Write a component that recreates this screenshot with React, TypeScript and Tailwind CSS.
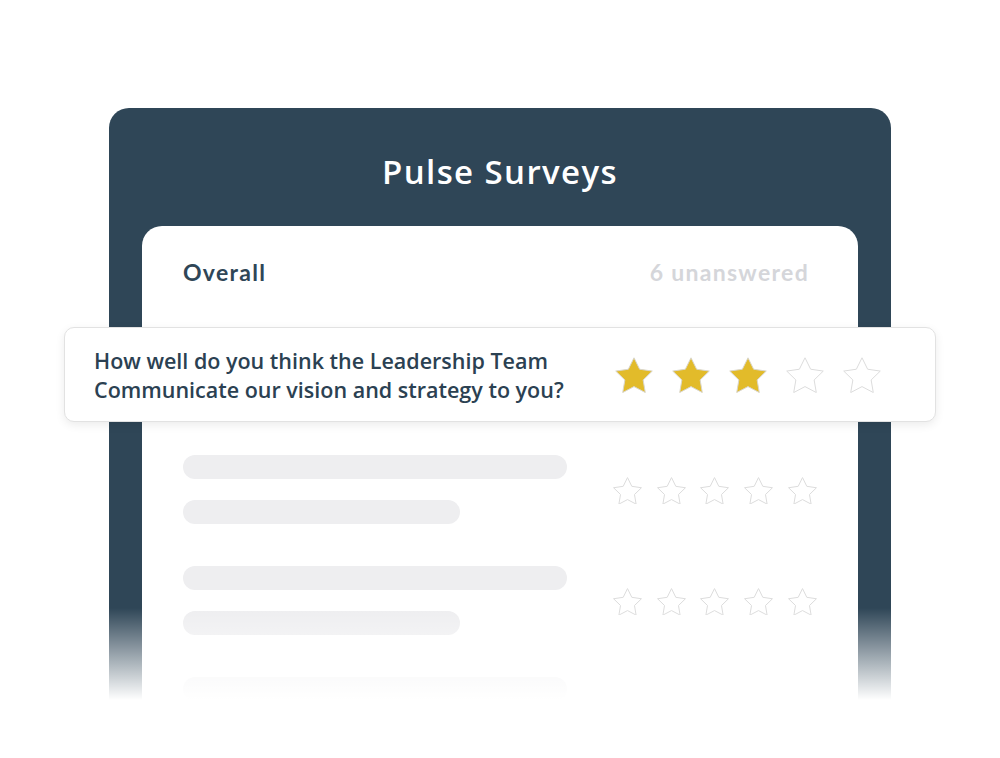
const STAR = '12,2 15.09,8.26 22,9.27 17,14.14 18.18,21.02 12,17.77 5.82,21.02 7,14.14 2,9.27 8.91,8.26';

type StarProps = { size: number; filled?: boolean };

const Star = ({ size, filled = false }: StarProps) => (
  <svg width={size} height={size * 0.96} viewBox="1.6 1.6 20.8 19.9" className="shrink-0">
    <polygon
      points={STAR}
      fill={filled ? '#e2bb2a' : '#ffffff'}
      stroke={filled ? '#d9d6cc' : '#dcdcdc'}
      strokeWidth={1}
      strokeLinejoin="round"
      vectorEffect="non-scaling-stroke"
    />
  </svg>
);

const SkeletonRow = () => (
  <div className="flex items-center">
    <div className="flex w-[384px] flex-col gap-[21px]">
      <div className="h-[24px] w-[384px] rounded-full bg-[#eeeef0]" />
      <div className="h-[24px] w-[277px] rounded-full bg-[#eeeef0]" />
    </div>
    <div className="ml-[46px] flex gap-[14.7px] pt-[2px]">
      {[0, 1, 2, 3, 4].map((i) => (
        <Star key={i} size={29} />
      ))}
    </div>
  </div>
);

export default function App() {
  return (
    <div className="relative h-[758px] w-[1000px] overflow-hidden bg-white">
      {/* Panel */}
      <div className="ml-[109px] mt-[108px] h-[650px] w-[782px] rounded-t-[20px] bg-[#2f4657]">
        <div className="flex h-[118px] items-center justify-center pt-[10px]">
          <h1 className="font-['Open_Sans',sans-serif] text-[33px] font-semibold tracking-[1.4px] text-white">
            Pulse Surveys
          </h1>
        </div>

        <div className="mx-[33px] h-[532px] rounded-t-[20px] bg-white pl-[41px] pr-[49px] pt-[31px]">
          <div className="flex h-[30px] items-center justify-between font-['Lato',sans-serif] text-[23px] font-bold tracking-[1.3px]">
            <span className="text-[#2f4657]">Overall</span>
            <span className="text-[#d5d6da]">6 unanswered</span>
          </div>

          <div className="mt-[168px] flex flex-col gap-[42px]">
            <SkeletonRow />
            <SkeletonRow />
            <SkeletonRow />
          </div>
        </div>
      </div>

      {/* Question card */}
      <div className="absolute left-[64px] top-[327px] flex h-[95px] w-[872px] items-center justify-between rounded-[10px] border border-[#e2e2e2] bg-white pl-[29px] pr-[54px] shadow-[0_3px_10px_rgba(0,0,0,0.08)]">
        <p className="font-['Open_Sans',sans-serif] text-[21.5px] font-semibold leading-[29px] text-[#2b4152]">
          How well do you think the Leadership Team
          <br />
          Communicate our vision and strategy to you?
        </p>
        <div className="flex gap-[19px] pt-[1px]">
          <Star size={38} filled />
          <Star size={38} filled />
          <Star size={38} filled />
          <Star size={38} />
          <Star size={38} />
        </div>
      </div>

      {/* Fade out */}
      <div className="pointer-events-none absolute bottom-0 left-0 right-0 top-[608px] bg-[linear-gradient(to_bottom,rgba(255,255,255,0)_0px,#ffffff_92px)]" />
    </div>
  );
}
